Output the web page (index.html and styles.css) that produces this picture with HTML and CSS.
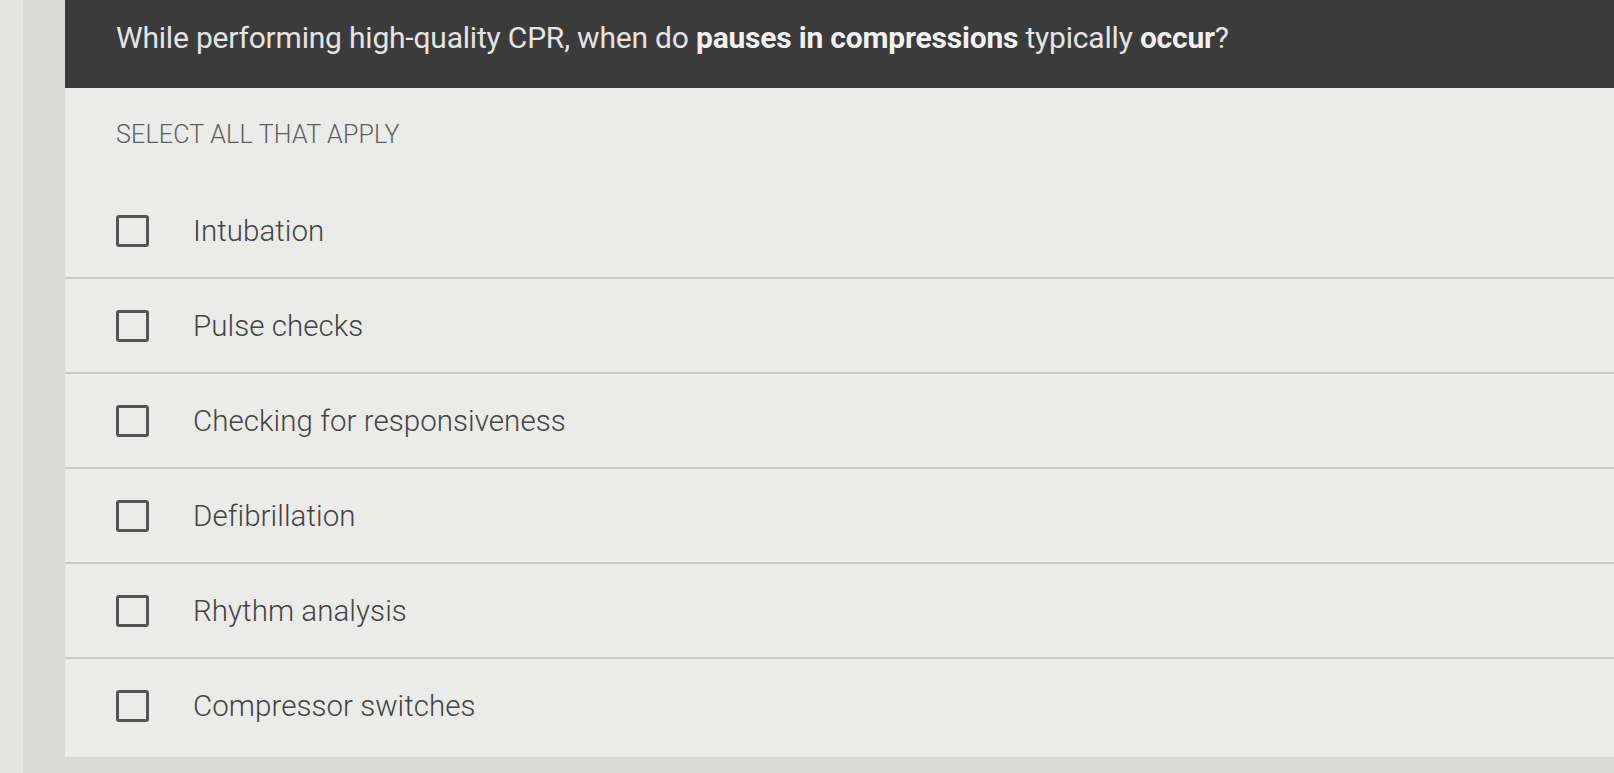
FILE: index.html
```html
<!DOCTYPE html>
<html>
<head>
<meta charset="utf-8">
<link rel="stylesheet" href="styles.css">
</head>
<body>
<div class="screen">
  <div class="edge-outer"></div>
  <div class="edge-inner"></div>
  <div class="main">
    <div class="question">
      <h1 class="q-text">While performing high-quality CPR, when do <b>pauses in compressions</b> typically <b>occur</b>?</h1>
    </div>
    <div class="panel">
      <div class="hint">SELECT ALL THAT APPLY</div>
      <ul class="options">
        <li class="option"><span class="box"></span><span class="label">Intubation</span></li>
        <li class="option"><span class="box"></span><span class="label">Pulse checks</span></li>
        <li class="option"><span class="box"></span><span class="label">Checking for responsiveness</span></li>
        <li class="option"><span class="box"></span><span class="label">Defibrillation</span></li>
        <li class="option"><span class="box"></span><span class="label">Rhythm analysis</span></li>
        <li class="option"><span class="box"></span><span class="label">Compressor switches</span></li>
      </ul>
    </div>
    <div class="below"></div>
  </div>
</div>
</body>
</html>
```

FILE: styles.css
```css
html, body {
  margin: 0;
  padding: 0;
  height: 100%;
  overflow: hidden;
}
body {
  font-family: Roboto, "Liberation Sans", sans-serif;
  background: #dcdcda;
}
.screen {
  display: flex;
  height: 773px;
}
.edge-outer {
  width: 23px;
  background: #e4e4e2;
}
.edge-inner {
  width: 42px;
  background: #dadad8;
}
.main {
  flex: 1;
  display: flex;
  flex-direction: column;
}
.question {
  height: 88px;
  background: #3c3b3c;
  display: flex;
  align-items: flex-start;
  box-sizing: border-box;
  padding: 19px 0 0 51px;
}
.q-text {
  margin: 0;
  font-size: 30px;
  font-weight: 400;
  color: #e4e4e4;
  letter-spacing: -0.2px;
  line-height: 38px;
}
.q-text b {
  font-weight: 700;
  color: #f0f0f0;
}
.panel {
  background: #ebebe9;
  height: 669px;
  box-sizing: border-box;
  padding-top: 31px;
}
.hint {
  padding-left: 51px;
  font-size: 25px;
  font-weight: 300;
  color: #5e5e5e;
  letter-spacing: 0.2px;
  line-height: 32px;
  margin-bottom: 33px;
}
.options {
  list-style: none;
  margin: 0;
  padding: 0;
}
.option {
  height: 93px;
  display: flex;
  align-items: center;
  padding-left: 51px;
  border-bottom: 2px solid #c9c9c7;
}
.option:last-child {
  border-bottom: none;
}
.box {
  width: 27px;
  height: 26px;
  border: 3px solid #555;
  border-radius: 3px;
  flex: none;
}
.label {
  margin-left: 44px;
  font-size: 29.5px;
  font-weight: 300;
  color: #444;
  letter-spacing: 0.05px;
}
.below {
  flex: 1;
  background: #d8d8d6;
}
```
